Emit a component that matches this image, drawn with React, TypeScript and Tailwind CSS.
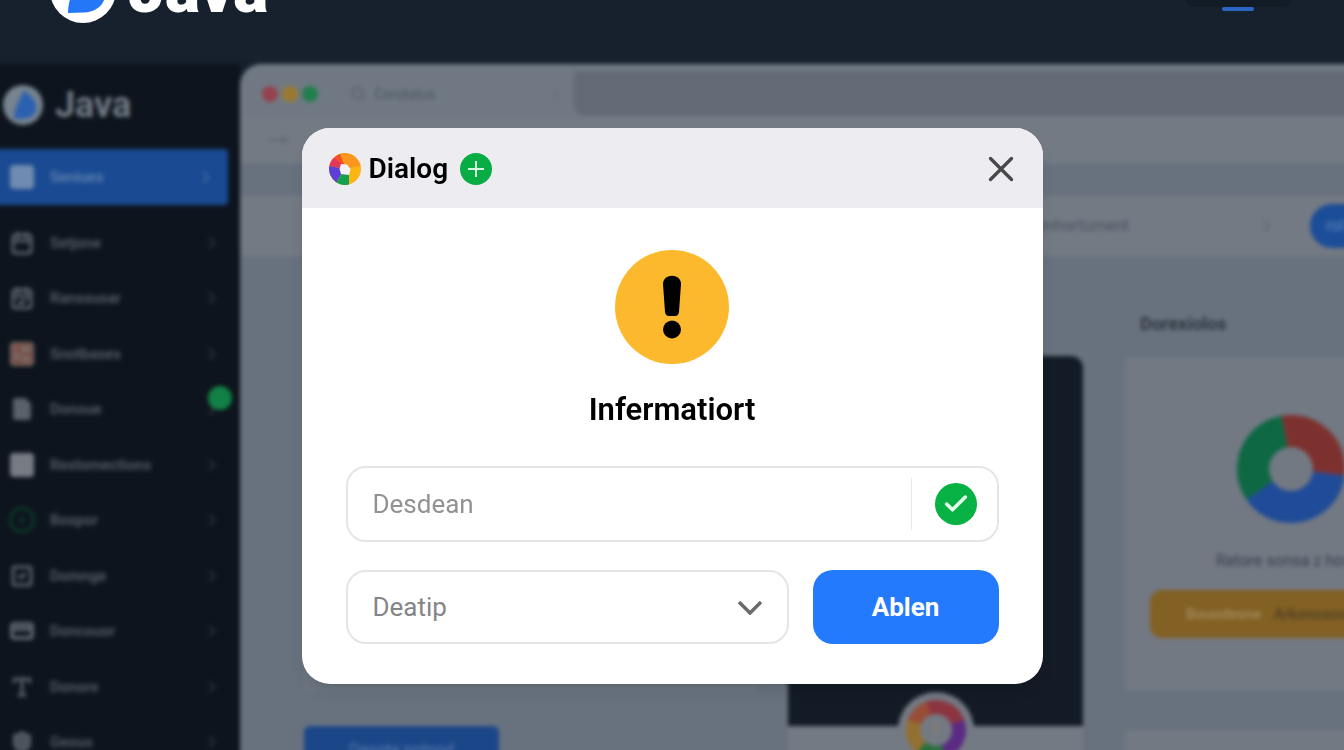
import React from 'react';
import {
  Calendar,
  CalendarCheck,
  Check,
  ChevronRight,
  CircleDot,
  CreditCard,
  FileText,
  Image as ImageIcon,
  LayoutGrid,
  MoveRight,
  NotebookText,
  Search,
  Shield,
  SquareCheck,
  Type,
  X,
} from 'lucide-react';

interface NavItem {
  label: string;
  icon: React.ReactNode;
  badge?: boolean;
}

const navItems: NavItem[] = [
  { label: 'Setjone', icon: <Calendar className="w-6 h-6" strokeWidth={3} /> },
  { label: 'Ranssusar', icon: <CalendarCheck className="w-6 h-6" strokeWidth={3} /> },
  { label: 'Snotbases', icon: <ImageIcon className="w-6 h-6 rounded-sm bg-[#75726f] text-[#7c4a40]" strokeWidth={3} /> },
  { label: 'Donoue', icon: <FileText className="w-6 h-6 fill-[#59616b]" />, badge: true },
  { label: 'Restomections', icon: <NotebookText className="w-6 h-6 rounded-sm bg-[#777c84] text-[#777c84]" /> },
  { label: 'Bospor', icon: <CircleDot className="w-7 h-7 -mx-[2px] text-[#0c3527]" strokeWidth={3} /> },
  { label: 'Domnge', icon: <SquareCheck className="w-6 h-6" strokeWidth={3} /> },
  { label: 'Doncouor', icon: <CreditCard className="w-6 h-6" strokeWidth={4} /> },
  { label: 'Donore', icon: <Type className="w-6 h-6" strokeWidth={3} /> },
  { label: 'Geous', icon: <Shield className="w-6 h-6 fill-[#4c535d]" /> },
];

const JavaMark: React.FC<{ className?: string; disc: string; leaf: string }> = ({ className = '', disc, leaf }) => (
  <svg viewBox="0 0 66 66" className={className} aria-hidden="true">
    <circle cx="33" cy="33" r="33" fill={disc} />
    <path d="M34 9C41 13 55 24 55 37C55 49 45 55 34 55.500L18 56C18 47 21 37 25 29C28 22 32 17 34 9Z" fill={leaf} />
  </svg>
);

const TopBar: React.FC = () => (
  <header className="flex h-16 items-start justify-between overflow-hidden pl-[50px] pr-[54px]">
    <a href="#" className="-mt-[43px] flex items-center gap-3 text-white">
      <JavaMark className="w-[66px] h-[66px]" disc="#ffffff" leaf="#2478f8" />
      <span className="text-[66px] leading-[64px] font-black">Java</span>
    </a>
    <nav className="flex w-[104px] flex-col items-center">
      <span className="h-[7px] w-full rounded-b-full bg-[#121c27]" />
      <span className="h-1 w-8 rounded-full bg-[#2b66c4]" />
    </nav>
  </header>
);

const Sidebar: React.FC = () => (
  <aside className="w-62 shrink-0 bg-[#0d141d] pl-2 text-[#59616b]">
    <div className="flex items-center gap-3 pt-5 pl-[3px]">
      <JavaMark className="w-10 h-10" disc="#77838f" leaf="#2b61b0" />
      <span className="text-[36px] leading-[42px] font-bold text-[#717a84]">Java</span>
    </div>
    <nav className="mt-[23px] text-[15px] leading-5 font-semibold">
      <a href="#" className="-ml-2 mr-3 flex h-14 items-center rounded-r-sm bg-[#194a92] pl-[18px] pr-3 text-[#6685b0]">
        <LayoutGrid className="w-6 h-6 rounded-sm bg-[#7890b0]" />
        <span className="ml-4 flex-1 blur-[1px]">Seniues</span>
        <ChevronRight className="w-5 h-5 text-[#4a6fa6]" />
      </a>
      <ul className="mt-[10px] flex h-[555px] flex-col">
        {navItems.map((item) => (
          <li key={item.label} className="relative flex-1">
            <a href="#" className="flex h-full items-center pl-[10px] pr-[18px]">
              {item.icon}
              <span className="ml-4 flex-1 blur-[1px]">{item.label}</span>
              <ChevronRight className="w-5 h-5 text-[#343c46]" />
            </a>
            {item.badge && <span className="absolute top-1 right-2 h-6 w-6 rounded-full bg-[#128145]" />}
          </li>
        ))}
      </ul>
    </nav>
  </aside>
);

const Donut: React.FC<{ className?: string }> = ({ className = '' }) => (
  <svg viewBox="0 0 108 108" className={className} fill="none" strokeWidth="32" aria-hidden="true">
    <circle cx="54" cy="54" r="38" stroke="#7d312e" pathLength="360" strokeDasharray="107 253" transform="rotate(-100 54 54)" />
    <circle cx="54" cy="54" r="38" stroke="#1f4b98" pathLength="360" strokeDasharray="139 221" transform="rotate(7 54 54)" />
    <circle cx="54" cy="54" r="38" stroke="#0d6843" pathLength="360" strokeDasharray="114 246" transform="rotate(146 54 54)" />
  </svg>
);

const AvatarRing: React.FC = () => (
  <svg viewBox="0 0 76 76" className="absolute -top-[34px] left-1/2 h-[76px] w-[76px] -translate-x-1/2" fill="none" strokeWidth="14" aria-hidden="true">
    <circle cx="38" cy="38" r="38" fill="#747a84" />
    <circle cx="38" cy="38" r="23" stroke="#8c343f" pathLength="360" strokeDasharray="92 268" transform="rotate(-110 38 38)" />
    <circle cx="38" cy="38" r="23" stroke="#5b2a83" pathLength="360" strokeDasharray="92 268" transform="rotate(-20 38 38)" />
    <circle cx="38" cy="38" r="23" stroke="#26703d" pathLength="360" strokeDasharray="62 298" transform="rotate(70 38 38)" />
    <circle cx="38" cy="38" r="23" stroke="#93702f" pathLength="360" strokeDasharray="72 288" transform="rotate(130 38 38)" />
    <circle cx="38" cy="38" r="23" stroke="#984d36" pathLength="360" strokeDasharray="52 308" transform="rotate(200 38 38)" />
    <path d="M38 31v10" stroke="#857a70" strokeWidth="5" />
  </svg>
);

const BrowserWindow: React.FC = () => (
  <main className="min-w-0 flex-1 overflow-hidden rounded-tl-[22px] bg-[#68727e]">
    {/* Tabs */}
    <div className="flex h-[52px] bg-[#707983] pt-2">
      <div className="flex w-[334px] items-center gap-1 pl-[22px]">
        <span className="h-4 w-4 rounded-full bg-[#96414e]" />
        <span className="h-4 w-4 rounded-full bg-[#9b7a2f]" />
        <span className="h-4 w-4 rounded-full bg-[#217e4b]" />
        <Search className="ml-7 w-4 h-4 text-[#535c67]" />
        <span className="ml-1 flex-1 text-sm text-[#4d5661]">Corotatus</span>
        <X className="mr-3 w-3 h-3 text-[#616a74]" />
      </div>
      <div className="h-full flex-1 rounded-bl-xl bg-[#616a75]" />
    </div>

    {/* Toolbar */}
    <div className="flex h-[47px] items-center bg-[#737a84] pl-7">
      <MoveRight className="w-5 h-5 text-[#5b646e]" />
    </div>

    {/* Search */}
    <div className="mt-[33px] flex h-15 items-center bg-[#737a84] pl-16 pr-6">
      <span className="w-[825px] shrink-0 text-right text-base text-[#4b545f]">Denhortument</span>
      <ChevronRight className="ml-[128px] w-5 h-5 shrink-0 text-[#5b646e]" />
      <button className="ml-auto h-11 w-[122px] shrink-0 rounded-full bg-[#1c4d98] pl-4 text-left text-base text-[#5f86bd]">
        rol
      </button>
    </div>

    <div className="mt-[54px] flex pl-16">
      <section className="mr-[30px] flex-1">
        <div className="mt-[46px] h-[336px] rounded-lg bg-[#6d7681]" />
        <button className="mt-[34px] h-12 w-[195px] rounded-md bg-[#1b4789] text-base text-[#5579aa]">
          Dasote notpod
        </button>
      </section>

      <section className="mr-[42px] mt-[46px] w-[295px] shrink-0">
        <div className="h-[370px] rounded-t-xl bg-[#131b26]" />
        <div className="relative h-24 bg-[#747a84]">
          <AvatarRing />
        </div>
      </section>

      <section className="w-[331px] shrink-0">
        <h2 className="pl-[15px] text-lg leading-7 font-bold text-[#2f3742]">Dorexiolos</h2>
        <div className="mt-5 flex h-[332px] flex-col items-center rounded-md bg-[#727983] px-[25px] pt-[57px]">
          <Donut className="w-[108px] h-[108px]" />
          <p className="mt-[26px] text-base text-[#3b434e]">Ratore sonsa z hosre</p>
          <button className="mt-[17px] flex h-12 w-full items-center gap-3 rounded-xl bg-[#836023] pl-9 text-[15px] font-medium">
            <span className="text-[#a18b5c]">Bouodesne</span>
            <span className="text-[#4f4127]">Arkonosos</span>
          </button>
        </div>
        <div className="mt-10 h-20 rounded-md bg-[#727983]" />
      </section>
    </div>
  </main>
);

const Dialog: React.FC = () => (
  <div role="dialog" aria-labelledby="dialog-title" className="w-full max-w-[741px] overflow-hidden rounded-[28px] bg-white shadow-lg">
    {/* Header */}
    <div className="flex h-20 items-center bg-[#ededf1] pl-[27px] pr-[26px] pt-[2px]">
      <svg viewBox="0 0 32 32" className="w-8 h-8" aria-hidden="true">
        <circle cx="16" cy="16" r="16" fill="#fdb515" />
        <path d="M15 14L10 1.200A16 16 0 0 1 31.500 13L20 15Z" fill="#fb961e" />
        <path d="M16 16L3 7A16 16 0 0 1 11 0.800L15 11Z" fill="#f4512a" />
        <path d="M16 16L0.300 13A16 16 0 0 1 4.500 5L13 11Z" fill="#e2365a" />
        <path d="M16 16L0.300 13A16 16 0 0 0 7.500 29.500L13 20Z" fill="#5b3fd8" />
        <path d="M14 19L7.500 29.500A16 16 0 0 0 20 31.500V19Z" fill="#12a150" />
        <path d="M12 11L18 11.500L21.500 16L20 22L12 21L10.500 16Z" fill="#f4f2f8" />
      </svg>
      <h1 id="dialog-title" className="ml-2 text-[28px] leading-9 font-semibold text-black">Dialog</h1>
      <button aria-label="Add" className="ml-3 flex h-8 w-8 items-center justify-center rounded-full bg-[#07ac44]">
        <svg viewBox="0 0 16 16" className="w-4 h-4" stroke="#d9f7e0" strokeWidth="2" aria-hidden="true">
          <path d="M8 0V16M0 8H16" />
        </svg>
      </button>
      <button aria-label="Close" className="ml-auto flex h-8 w-8 items-center justify-center">
        <svg viewBox="0 0 26 26" className="w-[26px] h-[26px]" stroke="#48484b" strokeWidth="3.300" strokeLinecap="round" aria-hidden="true">
          <path d="M2.500 2.500L23.500 23.500M23.500 2.500L2.500 23.500" />
        </svg>
      </button>
    </div>

    {/* Body */}
    <div className="flex flex-col items-center px-11 pt-[42px] pb-10">
      <svg viewBox="0 0 114 114" className="w-[114px] h-[114px]" aria-hidden="true">
        <circle cx="57" cy="57" r="57" fill="#fdb92e" />
        <path d="M48 34C48 23 66 23 66 34L64 62Q63.500 66 60 66H54Q50.500 66 50 62Z" fill="#000" />
        <circle cx="57" cy="79.500" r="9" fill="#000" />
      </svg>
      <h2 className="mt-7 text-[31px] leading-9 font-semibold text-black">Infermatiort</h2>

      <form className="mt-[38px] w-full text-[26px]" onSubmit={(e) => e.preventDefault()}>
        <div className="flex h-[76px] items-center rounded-[20px] border-2 border-[#e5e5e7] pl-[25px] pr-5">
          <input
            type="text"
            aria-label="Desdean"
            placeholder="Desdean"
            className="h-full min-w-0 flex-1 bg-transparent outline-none placeholder:text-[#929294]"
          />
          <span className="mr-[23px] h-[52px] w-px bg-[#e9e9eb]" />
          <span className="flex h-[42px] w-[42px] items-center justify-center rounded-full bg-[#07b143]">
            <Check className="w-7 h-7 text-[#e4ffe9]" strokeWidth={3} />
          </span>
        </div>

        <div className="mt-7 flex gap-6">
          <div className="relative h-[74px] flex-1">
            <select
              aria-label="Deatip"
              className="h-full w-full appearance-none rounded-[20px] border-2 border-[#e5e5e7] bg-white pl-[25px] text-[#858587] outline-none"
            >
              <option>Deatip</option>
            </select>
            <svg viewBox="0 0 24 14" className="pointer-events-none absolute top-[31px] right-[27px] h-[14px] w-6" fill="none" stroke="#6a6a6c" strokeWidth="3.500" aria-hidden="true">
              <path d="M1 1L12 12L23 1" />
            </svg>
          </div>
          <button type="submit" className="h-[74px] w-[186px] rounded-[20px] bg-[#247afd] font-bold text-white">
            Ablen
          </button>
        </div>
      </form>
    </div>
  </div>
);

const App: React.FC = () => {
  return (
    <div className="relative h-screen overflow-hidden bg-[#16212d] font-[Roboto,sans-serif]">
      <TopBar />
      <div className="-ml-2 -mr-28 flex blur-[2px]">
        <Sidebar />
        <BrowserWindow />
      </div>

      <div className="absolute inset-0 flex items-start justify-center pt-32">
        <Dialog />
      </div>
    </div>
  );
};

export default App;
